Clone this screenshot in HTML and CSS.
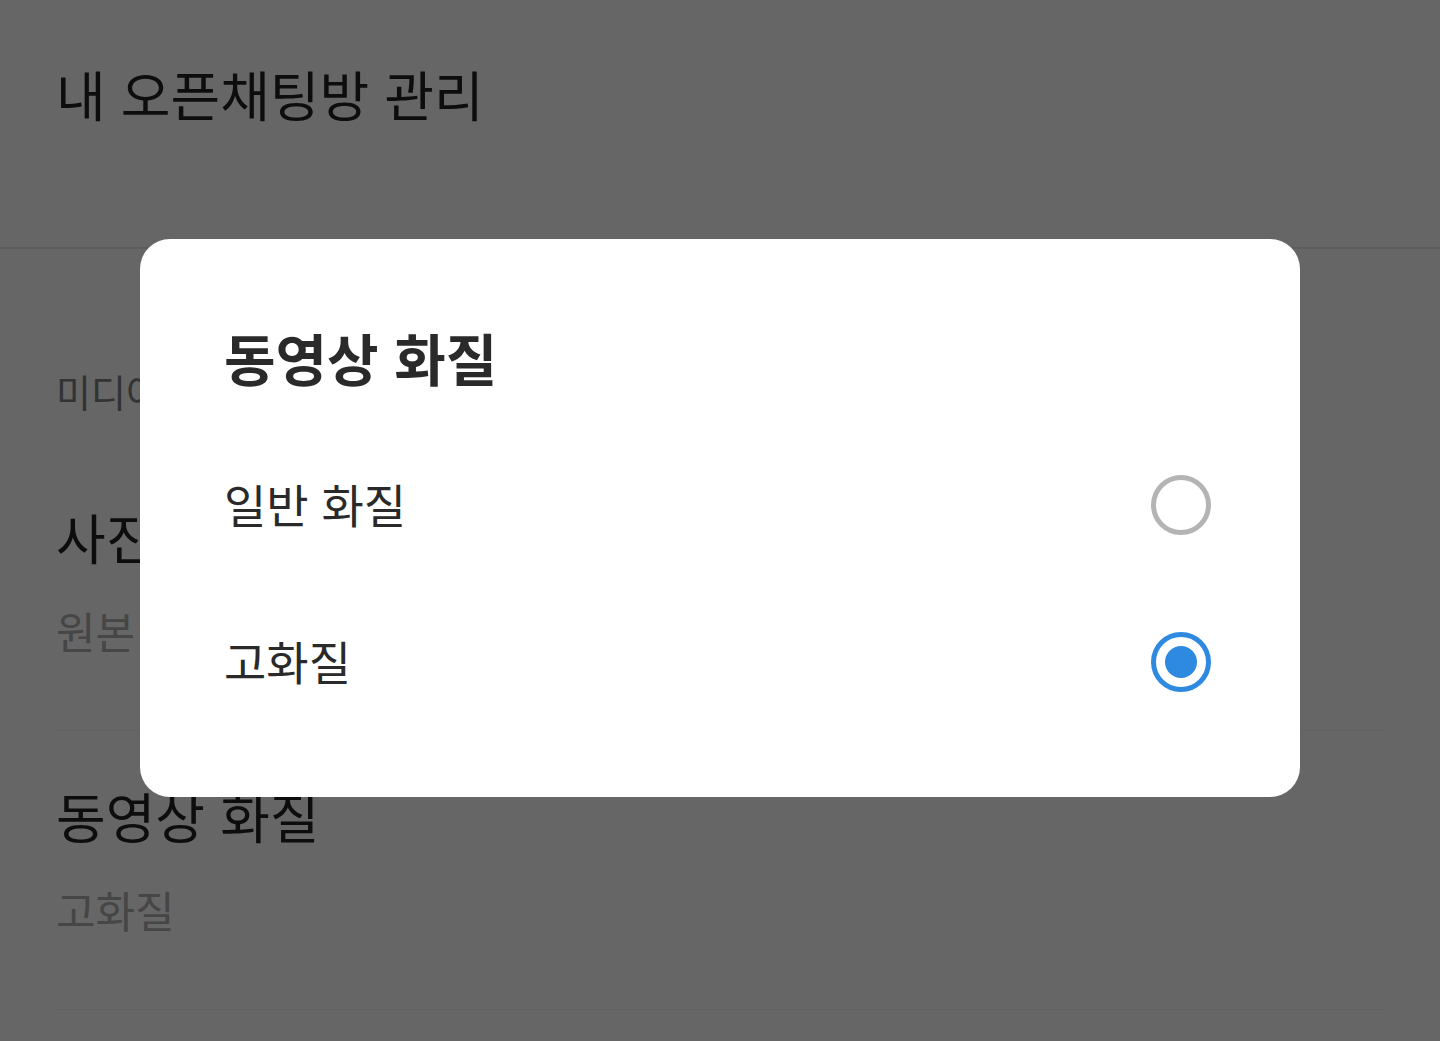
FILE: index.html
```html
<!DOCTYPE html>
<html lang="ko">
<head>
    <meta charset="UTF-8">
    <meta name="viewport" content="width=device-width, initial-scale=1.0">
    <title>내 오픈채팅방 관리</title>
    <link rel="stylesheet" href="styles.css">
</head>
<body>
    <div class="page">
        <div class="header">
            <span class="header-title">내 오픈채팅방 관리</span>
        </div>

        <div class="section">
            <div class="section-label">미디어</div>

            <div class="setting-item">
                <div class="setting-title">사진</div>
                <div class="setting-value">원본</div>
            </div>

            <div class="setting-item">
                <div class="setting-title">동영상 화질</div>
                <div class="setting-value">고화질</div>
            </div>
        </div>
    </div>

    <div class="overlay">
        <div class="dialog">
            <div class="dialog-title">동영상 화질</div>

            <div class="option">
                <span class="option-label">일반 화질</span>
                <span class="radio"></span>
            </div>
            <div class="option">
                <span class="option-label">고화질</span>
                <span class="radio checked"></span>
            </div>
        </div>
    </div>
</body>
</html>
```

FILE: styles.css
```css
html, body {
    width: 100%;
    height: 100%;
    margin: 0;
    padding: 0;
    overflow: hidden;
}

body {
    font-family: "Noto Sans CJK KR", "Noto Sans", sans-serif;
    background-color: #fff;
    color: #2a2a2a;
}

.page {
    display: flex;
    flex-direction: column;
}

.header {
    height: 183px;
    padding: 64px 57px 0 56px;
    border-bottom: 2px solid #ebebeb;
}

.header-title {
    font-size: 54px;
    line-height: 60px;
    color: #222;
}

.section {
    padding: 120px 56px 0 56px;
}

.section-label {
    font-size: 38px;
    line-height: 43px;
    color: #808080;
    margin-bottom: 40px;
}

.setting-item {
    padding: 57px 0 76px 0;
    border-bottom: 1px solid #f4f4f4;
}

.setting-title {
    font-size: 54px;
    line-height: 60px;
    margin-bottom: 37px;
    color: #222;
    position: relative;
    top: -2px;
}

.setting-value {
    font-size: 43px;
    line-height: 48px;
    color: #b0b0b0;
}

/* dim layer + dialog */
.overlay {
    position: fixed;
    top: 0;
    left: 0;
    right: 0;
    bottom: 0;
    background-color: rgba(0, 0, 0, 0.6);
    display: flex;
    align-items: center;
    justify-content: center;
}

.dialog {
    width: 1160px;
    box-sizing: border-box;
    background-color: #fff;
    border-radius: 30px;
    padding: 87px 89px 58px 84px;
    margin-bottom: 5px;
}

.dialog-title {
    font-size: 56px;
    line-height: 62px;
    font-weight: 700;
    color: #2a2a2a;
    margin-bottom: 37px;
}

.option {
    display: flex;
    align-items: center;
    justify-content: space-between;
    height: 157px;
}

.option-label {
    font-size: 46px;
    line-height: 53px;
    color: #2a2a2a;
}

.radio {
    width: 60px;
    height: 60px;
    box-sizing: border-box;
    border: 5px solid #b4b4b4;
    border-radius: 50%;
    display: flex;
    align-items: center;
    justify-content: center;
    position: relative;
    top: 1px;
}

.radio.checked {
    border-color: #2e89e0;
}

.radio.checked::after {
    content: "";
    width: 32px;
    height: 32px;
    border-radius: 50%;
    background-color: #2e89e0;
}
```
